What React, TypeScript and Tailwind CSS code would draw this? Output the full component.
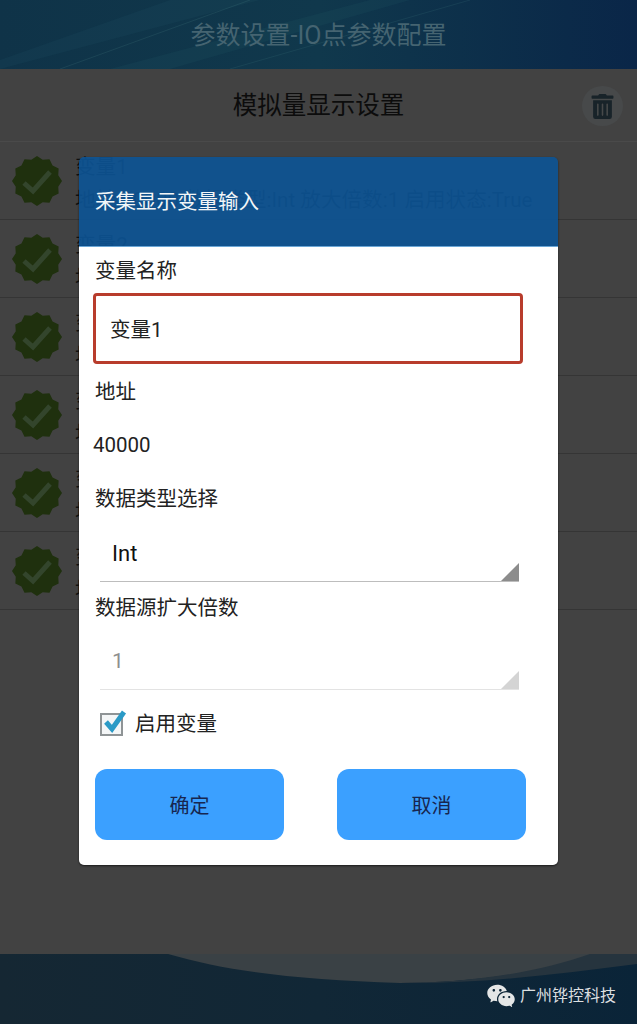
import { FaTrashAlt } from 'react-icons/fa'
import { RiWechatFill } from 'react-icons/ri'

const FONT = "font-['Roboto','Noto_Sans_CJK_SC',sans-serif]"

const VARIABLES = ['变量1', '变量2', '变量3', '变量4', '变量5', '变量6']

const badgePoints = Array.from({ length: 24 }, (_, i) => {
  const r = i % 2 === 0 ? 25 : 22
  const a = (i * Math.PI) / 12 - Math.PI / 2
  return `${25 + r * Math.cos(a)},${25 + r * Math.sin(a)}`
}).join(' ')

function Badge() {
  return (
    <svg width="50" height="50" viewBox="0 0 50 50" className="shrink-0">
      <polygon points={badgePoints} fill="#1f300e" />
      <path d="M12 27l9 8 17-19" fill="none" stroke="#33452c" strokeWidth="5" />
    </svg>
  )
}

function Select({ value, muted }: { value: string; muted?: boolean }) {
  return (
    <div
      className={`relative ml-[21px] flex h-[58px] w-[419px] items-center border-b pt-[2px] ${
        muted ? 'border-[#e3e3e3]' : 'border-[#bdbdbd]'
      }`}
    >
      <span
        className={muted ? 'ml-3 text-[21px] text-[#8f8f8f]' : 'ml-3 text-[22px] text-[#111]'}
      >
        {value}
      </span>
      <svg width="18" height="18" viewBox="0 0 18 18" className="absolute right-0 bottom-0">
        <polygon points="18,0 18,18 0,18" fill={muted ? '#d4d4d4' : '#8c8c8c'} />
      </svg>
    </div>
  )
}

function Label({ text, height }: { text: string; height: string }) {
  return (
    <div className={`flex items-center pt-[2px] pl-4 text-[20.5px] text-[#222] ${height}`}>{text}</div>
  )
}

function Dialog() {
  return (
    <div className="absolute top-[157px] left-[79px] w-[479px] overflow-hidden rounded-[5px] shadow-[0_1px_2px_rgba(0,0,0,0.6)]">
      <div className="flex h-[90px] items-center border-b border-[#6aa6d6] bg-[#0c5496]/90 pt-[2px] pl-4 text-[20.5px] text-[#f2f6f8]">
        采集显示变量输入
      </div>
      <div className="bg-white">
        <Label text="变量名称" height="h-[46px]" />
        <div className="ml-[14px] flex h-[71px] w-[430px] items-center rounded-[4px] border-[3px] border-[#b83c2c] pt-[3px] pl-[14px] text-[20.5px] text-[#222]">
          变量1
        </div>
        <Label text="地址" height="h-[54px]" />
        <div className="flex h-[54px] items-center pl-[14px] text-[20.5px] text-[#222]">40000</div>
        <Label text="数据类型选择" height="h-[52px]" />
        <Select value="Int" />
        <Label text="数据源扩大倍数" height="h-[50px]" />
        <Select value="1" muted />
        <div className="flex h-[68px] items-center pl-[21px]">
          <div className="relative h-[23px] w-[23px] border-2 border-[#8f9496] bg-[#f4f6f7]">
            <svg width="30" height="28" viewBox="0 0 30 28" className="absolute -top-[8px] -left-[1px]">
              <path d="M5 15l6 7L23 5" fill="none" stroke="#2b9ac6" strokeWidth="5" />
            </svg>
          </div>
          <span className="ml-3 text-[20.5px] text-[#222]">启用变量</span>
        </div>
        <div className="mt-[11px] flex justify-between px-4 pb-[25px]">
          <button className="h-[71px] w-[189px] rounded-[12px] bg-[#3ba0ff] pt-[3px] text-[20px] text-[#17264f]">
            确定
          </button>
          <button className="mr-[16px] h-[71px] w-[189px] rounded-[12px] bg-[#3ba0ff] pt-[3px] text-[20px] text-[#17264f]">
            取消
          </button>
        </div>
      </div>
    </div>
  )
}

export default function App() {
  return (
    <div className={`relative flex h-[1024px] w-[637px] flex-col overflow-hidden bg-[#424242] ${FONT}`}>
      <header className="relative flex h-[69px] items-center justify-center overflow-hidden bg-gradient-to-r from-[#0f3348] via-[#10384c] to-[#0a2648]">
        <svg width="637" height="69" viewBox="0 0 637 69" className="absolute inset-0">
          <path d="M0 60L170 0h90L0 69z" fill="#2a6270" opacity="0.12" />
          <path d="M110 69L370 0h40L170 69z" fill="#2a6b74" opacity="0.12" />
          <path d="M230 69L470 0" stroke="#4d8a8c" strokeWidth="1" opacity="0.15" />
          <path d="M60 69L250 0" stroke="#5f9a98" strokeWidth="1" opacity="0.15" />
        </svg>
        <span className="relative pt-[2px] text-[25px] text-[#456471]">参数设置-IO点参数配置</span>
      </header>

      <div className="relative flex h-[73px] items-center justify-center border-b border-[#4a4a4a]">
        <span className="pt-[2px] text-[24.5px] text-[#0c0c0c]">模拟量显示设置</span>
        <div className="absolute top-[17px] right-[14px] flex h-[40px] w-[41px] items-center justify-center rounded-full bg-[#47494a]">
          <FaTrashAlt className="text-[25px] text-[#182329]" />
        </div>
      </div>

      {VARIABLES.map((name) => (
        <div key={name} className="flex h-[78px] items-center border-b border-[#353535] pl-3">
          <Badge />
          <div className="mt-[6px] ml-[13px] whitespace-nowrap text-[#101010]">
            <div className="text-[20.6px] leading-[26px]">{name}</div>
            <div className="mt-[7px] text-[20.6px] leading-[26px]">
              地址:40000 数据类型:Int 放大倍数:1 启用状态:True
            </div>
          </div>
        </div>
      ))}

      <div className="flex-1" />

      <footer className="relative flex h-[70px] items-end justify-end overflow-hidden bg-gradient-to-r from-[#152733] via-[#112736] to-[#0a2438]">
        <svg width="637" height="70" viewBox="0 0 637 70" className="absolute inset-0">
          <path d="M168 0C230 18 300 26 400 29C470 29 540 18 637 0z" fill="#3a4145" />
          <path d="M400 29C470 29 540 18 590 0h47v10C560 20 480 30 400 29z" fill="#26343e" />
        </svg>
        <div className="relative flex items-center pr-[21px] pb-[13px] text-[16px] text-[#dcdfe0]">
          <RiWechatFill className="mr-[4px] text-[30px] text-[#e4e6e6]" />
          广州铧控科技
        </div>
      </footer>

      <Dialog />
    </div>
  )
}
